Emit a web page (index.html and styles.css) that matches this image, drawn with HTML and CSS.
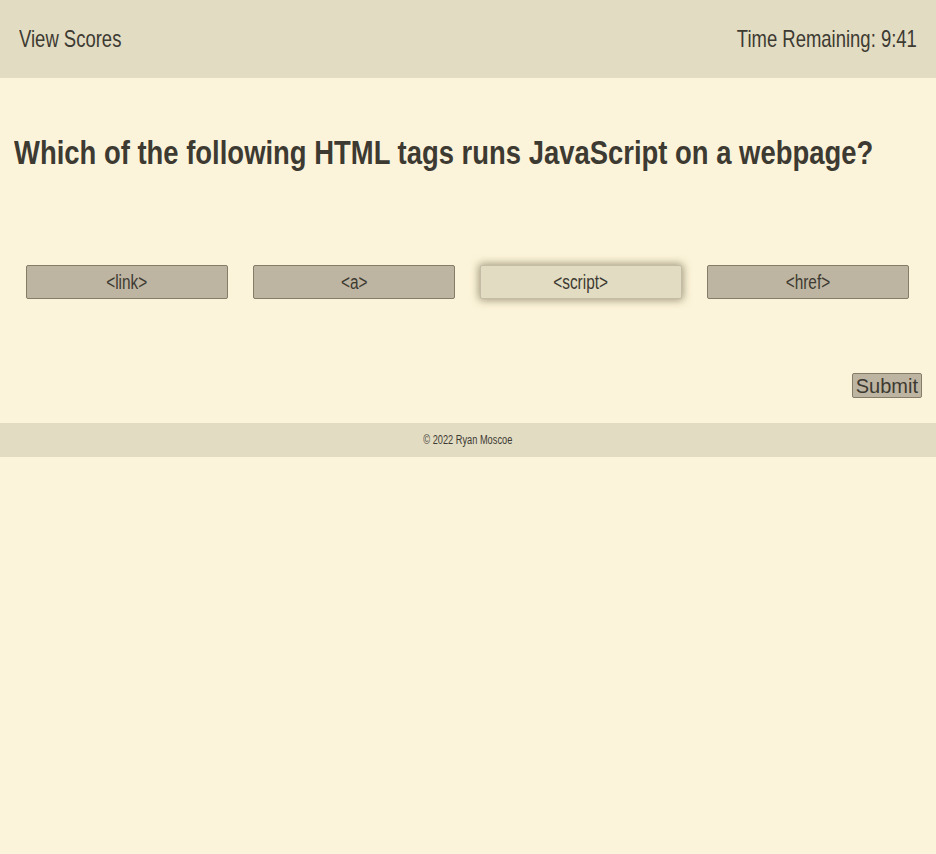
FILE: index.html
```html
<!DOCTYPE html>
<html lang="en">
<head>
<meta charset="utf-8">
<title>Quiz</title>
<link rel="stylesheet" href="styles.css">
</head>
<body>
<header class="top-bar">
  <a class="view-scores"><span class="narrow left">View Scores</span></a>
  <span class="timer"><span class="narrow right">Time Remaining: 9:41</span></span>
</header>
<main class="quiz">
  <h1 class="question"><span class="narrow-bold">Which of the following HTML tags runs JavaScript on a webpage?</span></h1>
  <div class="answers">
    <button class="answer"><span class="narrow">&lt;link&gt;</span></button>
    <button class="answer"><span class="narrow">&lt;a&gt;</span></button>
    <button class="answer active"><span class="narrow">&lt;script&gt;</span></button>
    <button class="answer"><span class="narrow">&lt;href&gt;</span></button>
  </div>
  <div class="submit-row">
    <button class="submit">Submit</button>
  </div>
</main>
<footer class="footer"><span class="narrow">© 2022 Ryan Moscoe</span></footer>
</body>
</html>
```
FILE: styles.css
```css
html, body {
  margin: 0;
  padding: 0;
  background: #fcf4da;
  color: #3d3a32;
  font-family: "Liberation Sans", Arial, sans-serif;
  overflow-x: hidden;
}
.narrow {
  display: inline-block;
  white-space: nowrap;
  transform: scaleX(0.77);
  transform-origin: center;
}
.narrow.left {
  transform-origin: left center;
}
.narrow.right {
  transform-origin: right center;
}
.narrow-bold {
  display: inline-block;
  white-space: nowrap;
  transform: scaleX(0.807);
  transform-origin: left center;
}
.top-bar {
  height: 78px;
  background: #e2dcc3;
  display: flex;
  align-items: center;
  justify-content: space-between;
  padding: 0 19px;
  font-size: 24px;
}
.view-scores {
  cursor: pointer;
}
.question {
  margin: 0;
  padding: 52px 14px 0;
  font-size: 34px;
  font-weight: bold;
  height: 82px;
  line-height: 44px;
  overflow: hidden;
}
.answers {
  display: grid;
  grid-template-columns: repeat(4, 1fr);
  column-gap: 25.6px;
  padding: 53px 27px 0 26px;
}
.answer {
  height: 34px;
  background: #bdb5a1;
  border: 1px solid #857d68;
  border-radius: 2px;
  color: #3d3a32;
  font-family: inherit;
  font-size: 20px;
  padding: 0;
  overflow: visible;
}
.answer.active {
  background: #e2dcc3;
  box-shadow: 0 0 8px 1px rgba(90, 80, 50, 0.6);
  border-color: #c4bca6;
}
.submit-row {
  display: flex;
  justify-content: flex-end;
  padding: 74px 14px 25px;
}
.submit {
  background: #bdb5a1;
  border: 1px solid #857d68;
  border-radius: 2px;
  color: #3d3a32;
  font-family: "Liberation Sans", Arial, sans-serif;
  font-size: 20px;
  padding: 0 3px;
  height: 25px;
  line-height: 22px;
}
.footer {
  background: #e2dcc3;
  height: 34px;
  display: flex;
  align-items: center;
  justify-content: center;
  font-size: 12px;
}
```
